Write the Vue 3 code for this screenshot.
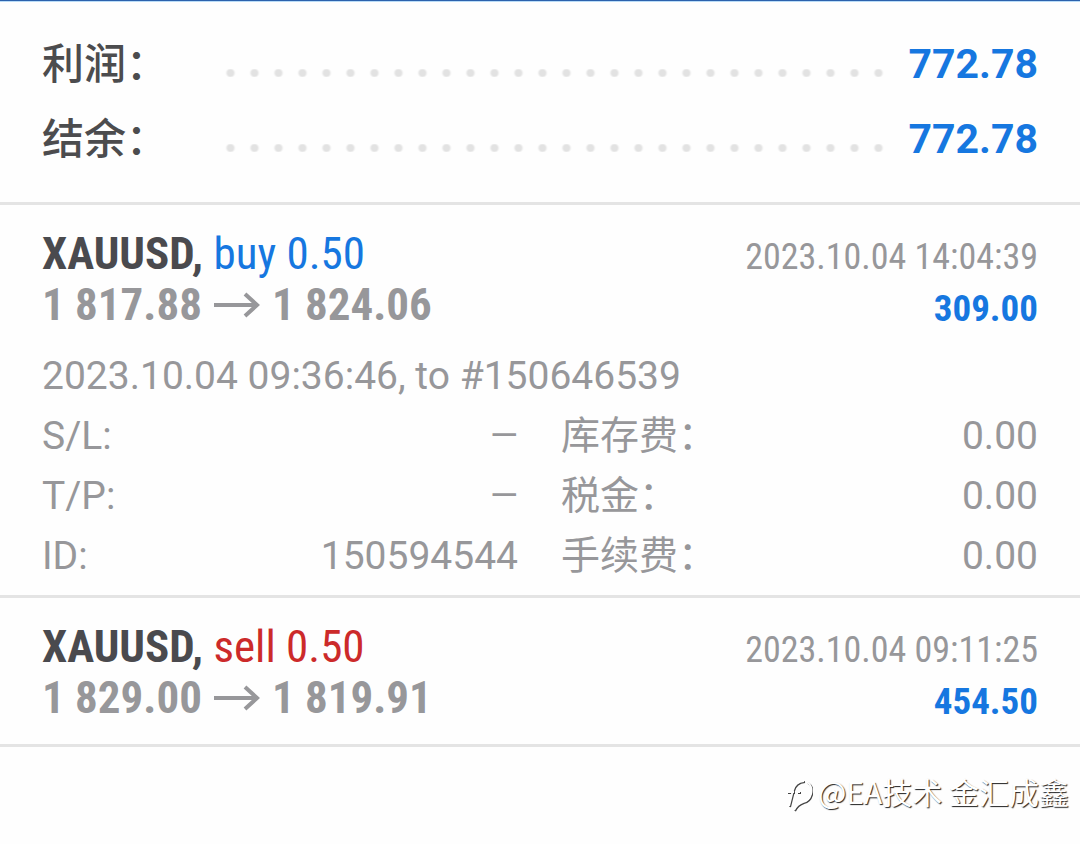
<script setup>
const totals = [
  { label: '利润：', value: '772.78' },
  { label: '结余：', value: '772.78' },
]

const deals = [
  {
    symbol: 'XAUUSD',
    side: 'buy',
    volume: '0.50',
    from: '1 817.88',
    to: '1 824.06',
    time: '2023.10.04 14:04:39',
    profit: '309.00',
    note: '2023.10.04 09:36:46, to #150646539',
    left: [
      { label: 'S/L:', value: '—' },
      { label: 'T/P:', value: '—' },
      { label: 'ID:', value: '150594544' },
    ],
    right: [
      { label: '库存费：', value: '0.00' },
      { label: '税金：', value: '0.00' },
      { label: '手续费：', value: '0.00' },
    ],
  },
  {
    symbol: 'XAUUSD',
    side: 'sell',
    volume: '0.50',
    from: '1 829.00',
    to: '1 819.91',
    time: '2023.10.04 09:11:25',
    profit: '454.50',
  },
]
</script>

<template>
  <main class="history">
    <dl class="totals">
      <div v-for="t in totals" :key="t.label" class="total">
        <dt>{{ t.label }}</dt>
        <span class="dots" aria-hidden="true"></span>
        <dd>{{ t.value }}</dd>
      </div>
    </dl>

    <article v-for="d in deals" :key="d.time" class="deal">
      <div class="head">
        <div class="main">
          <h2 class="title">{{ d.symbol }}, <span :class="d.side">{{ d.side }} {{ d.volume }}</span></h2>
          <p class="prices">
            <span>{{ d.from }}</span>
            <svg class="arrow" viewBox="0 0 46 26" aria-label="→" role="img">
              <path d="M0 13H43M31 2L43 13L31 24" />
            </svg>
            <span>{{ d.to }}</span>
          </p>
        </div>
        <div class="side">
          <time>{{ d.time }}</time>
          <p class="profit">{{ d.profit }}</p>
        </div>
      </div>
      <div v-if="d.note" class="details">
        <p>{{ d.note }}</p>
        <div class="columns">
          <dl v-for="(col, i) in [d.left, d.right]" :key="i">
            <div v-for="r in col" :key="r.label" class="row">
              <dt>{{ r.label }}</dt>
              <dd :class="{ empty: r.value === '—' }">{{ r.value }}</dd>
            </div>
          </dl>
        </div>
      </div>
    </article>

    <footer class="credit">
      <svg class="logo" viewBox="0 0 28 36" aria-hidden="true">
        <g class="shade">
          <path d="M4 29L8 13Q10 5 19 4M2 15H9M12 15H15M22 5Q28 9 26 17Q24 24 18 25Q12 27 9 33" />
        </g>
        <g class="face">
          <path d="M4 29L8 13Q10 5 19 4M2 15H9M12 15H15M22 5Q28 9 26 17Q24 24 18 25Q12 27 9 33" />
        </g>
      </svg>
      <span>@EA技术 金汇成鑫</span>
    </footer>
  </main>
</template>

<style>
body {
  background: #fefefe;
}
</style>

<style scoped>
.history {
  font-family: Roboto, "Noto Sans CJK SC", sans-serif;
  color: #97979a;
  border-top: 1px solid #2c62ac;
  box-shadow: inset 0 1px 0 #b9dcf8;
}

dl,
dd,
h2,
p {
  margin: 0;
}

.totals {
  padding: 26px 42px 25px;
  border-bottom: 3px solid #e4e4e4;
}

.total {
  display: flex;
  align-items: center;
  height: 75px;
  font-size: 42px;
  line-height: 75px;
}

.total dt {
  width: 176px;
  color: #4c4c4e;
  font-weight: 500;
}

.dots {
  flex: 1;
  height: 8px;
  margin: 16px 18px 0 0;
  background: radial-gradient(circle, #e2e2e2 3px, transparent 5px) right / 24px 8px repeat-x;
}

.total dd {
  color: #1677e0;
  font-size: 41px;
  font-weight: 700;
}

.deal {
  padding: 23px 42px 9px;
  border-bottom: 3px solid #e4e4e4;
}

.head {
  display: flex;
  justify-content: space-between;
  font-family: "Roboto Condensed", "Liberation Sans Narrow", Roboto, sans-serif;
  padding-bottom: 8px;
}

.title,
.prices {
  font-size: 45px;
  line-height: 51px;
  font-weight: 700;
}

.title {
  color: #4a4a4e;
}

.title span {
  font-weight: 400;
}

.title .buy {
  color: #1677e0;
}

.title .sell {
  color: #cc2a2a;
}

.prices {
  display: flex;
  align-items: center;
}

.arrow {
  width: 46px;
  height: 26px;
  margin: 0 12px;
  fill: none;
  stroke: #97979a;
  stroke-width: 4;
}

.side {
  text-align: right;
  font-size: 37px;
  line-height: 51px;
  padding-top: 4px;
}

.side time {
  display: block;
  font-size: 36px;
}

.profit {
  color: #1677e0;
  font-weight: 700;
}

.details {
  font-size: 39px;
  line-height: 60px;
  padding-top: 4px;
}

.columns {
  display: grid;
  grid-template-columns: 476px 1fr;
  column-gap: 43px;
}

.row {
  display: flex;
  justify-content: space-between;
  height: 60px;
}

.row .empty {
  font-size: 36px;
}

.credit {
  display: flex;
  justify-content: flex-end;
  align-items: center;
  gap: 5px;
  padding: 22px 11px 0;
  font-family: "Noto Sans CJK SC", sans-serif;
  font-size: 30px;
  line-height: 44px;
  font-weight: 400;
  color: #ffffff;
  text-shadow: 1px 1px 1px #222222;
}

.logo {
  width: 28px;
  height: 36px;
  margin-top: 8px;
  fill: none;
  stroke-width: 2;
}

.shade {
  stroke: #444444;
  transform: translate(1px, 1px);
}

.face {
  stroke: #ffffff;
}
</style>
